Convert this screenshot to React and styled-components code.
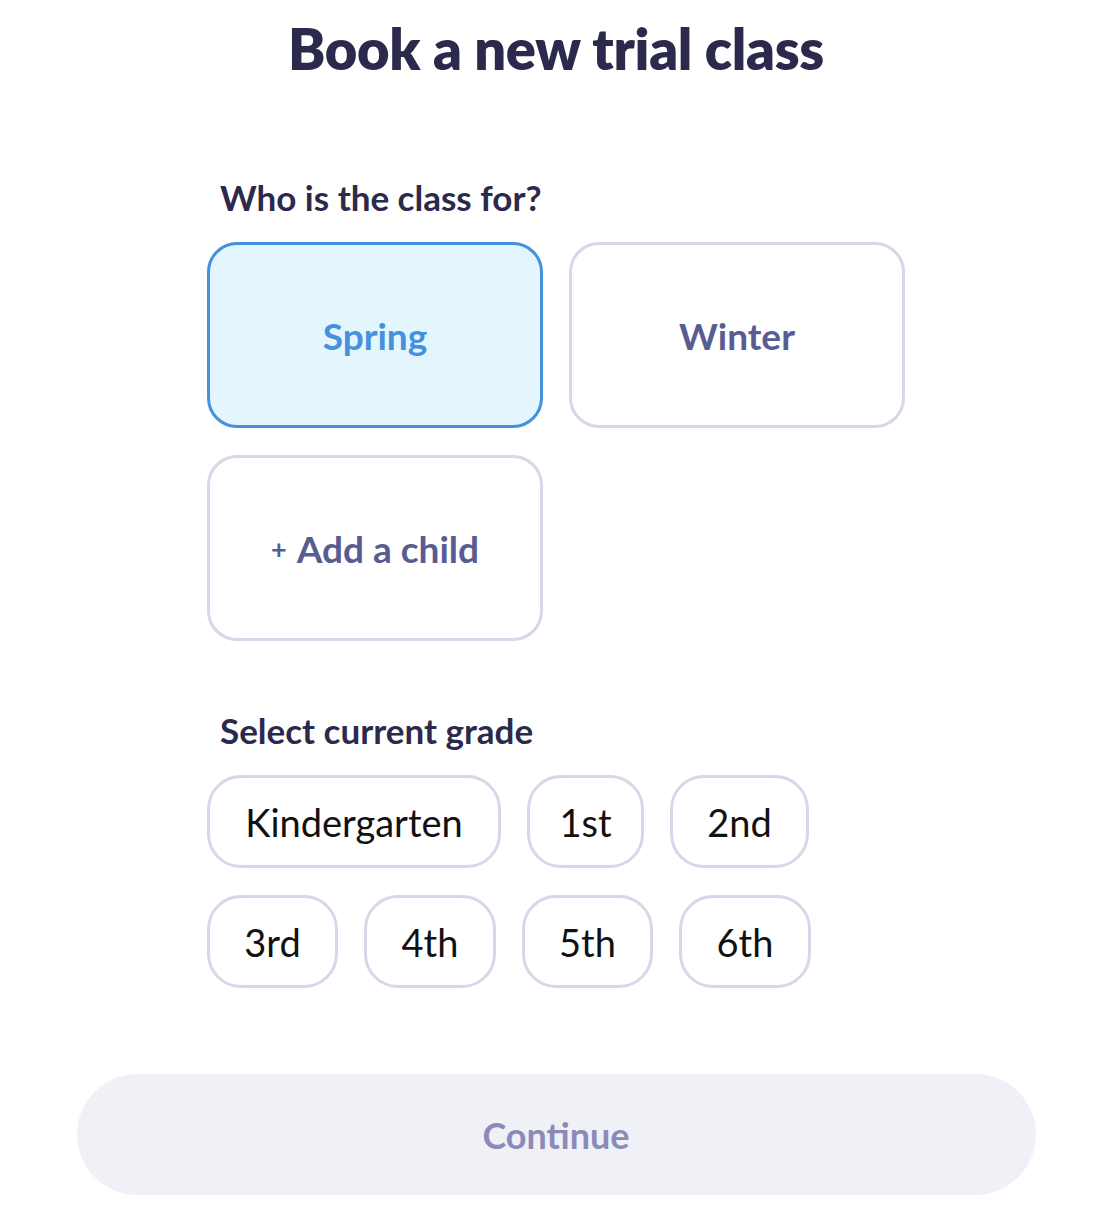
import React from 'react'
import styled, { createGlobalStyle } from 'styled-components'

const GlobalStyle = createGlobalStyle`
  body {
    margin: 0;
    background: #ffffff;
    font-family: Lato, "Noto Sans", sans-serif;
  }
`

const Page = styled.div`
  width: 1112px;
  display: flex;
  flex-direction: column;
  align-items: center;
`

const Title = styled.h1`
  margin: 12px 0 0;
  font-size: 56px;
  font-weight: 800;
  color: #2b2a4c;
  line-height: 74px;
  letter-spacing: -0.3px;
`

const Section = styled.div`
  width: 698px;
  display: flex;
  flex-direction: column;
  margin-top: ${(p) => p.top}px;
`

const Label = styled.h2`
  margin: 0 0 24px 13px;
  font-size: 35px;
  font-weight: 700;
  color: #2b2a4c;
  line-height: 42px;
`

const CardGrid = styled.div`
  display: grid;
  grid-template-columns: 336px 336px;
  gap: 27px 26px;
`

const Card = styled.button`
  height: 186px;
  border-radius: 30px;
  border: 3px solid ${(p) => (p.selected ? '#4591de' : '#d6d8ea')};
  background: ${(p) => (p.selected ? '#e3f5fd' : '#ffffff')};
  color: ${(p) => (p.selected ? '#4591de' : '#585c92')};
  font-family: inherit;
  font-size: 37px;
  font-weight: 700;
  display: flex;
  align-items: center;
  justify-content: center;
  gap: 10px;
  cursor: pointer;
`

const Plus = styled.span`
  font-size: 27px;
`

const PillRow = styled.div`
  display: flex;
  gap: 26px;
  margin-bottom: 27px;
`

const Pill = styled.button`
  width: ${(p) => p.w}px;
  height: 93px;
  border-radius: 34px;
  border: 3px solid #d6d8ea;
  background: #ffffff;
  color: #111111;
  font-family: inherit;
  font-size: 38px;
  font-weight: 400;
  cursor: pointer;
`

const ContinueButton = styled.button`
  margin-top: 59px;
  width: 959px;
  height: 121px;
  border: none;
  border-radius: 61px;
  background: #f0f1f6;
  color: #8b8ab8;
  font-family: inherit;
  font-size: 36px;
  font-weight: 700;
`

export default function App() {
  const row1 = [
    ['Kindergarten', 294],
    ['1st', 117],
    ['2nd', 139],
  ]
  const row2 = [
    ['3rd', 131],
    ['4th', 132],
    ['5th', 131],
    ['6th', 132],
  ]
  return (
    <Page>
      <GlobalStyle />
      <Title>Book a new trial class</Title>
      <Section top={90}>
        <Label>Who is the class for?</Label>
        <CardGrid>
          <Card selected>Spring</Card>
          <Card>Winter</Card>
          <Card>
            <Plus>+</Plus>Add a child
          </Card>
        </CardGrid>
      </Section>
      <Section top={68}>
        <Label>Select current grade</Label>
        {[row1, row2].map((row, i) => (
          <PillRow key={i}>
            {row.map(([name, w]) => (
              <Pill key={name} w={w}>{name}</Pill>
            ))}
          </PillRow>
        ))}
      </Section>
      <ContinueButton>Continue</ContinueButton>
    </Page>
  )
}
